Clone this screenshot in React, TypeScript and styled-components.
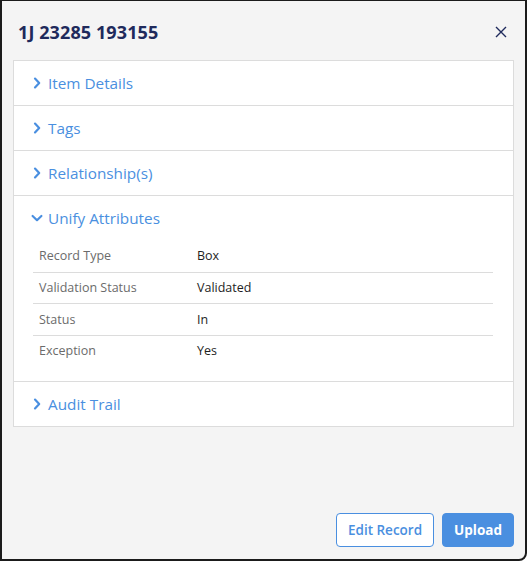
import React, { useState } from 'react';
import styled, { createGlobalStyle } from 'styled-components';

const GlobalStyle = createGlobalStyle`
  html, body {
    margin: 0;
    padding: 0;
    background: #ffffff;
  }
  body {
    font-family: 'Open Sans', 'Liberation Sans', sans-serif;
  }
  * {
    box-sizing: border-box;
  }
`;

const BLUE = '#4a8fe0';

type Attr = { label: string; value: string };

const attributes: Attr[] = [
  { label: 'Record Type', value: 'Box' },
  { label: 'Validation Status', value: 'Validated' },
  { label: 'Status', value: 'In' },
  { label: 'Exception', value: 'Yes' },
];

const sections = ['Item Details', 'Tags', 'Relationship(s)', 'Unify Attributes', 'Audit Trail'];

function Chevron({ open }: { open: boolean }) {
  return (
    <ChevronBox $open={open}>
      <svg width='12' height='12' viewBox='0 0 12 12'>
        <path d='M4 1.6 L8.2 6 L4 10.4' fill='none' stroke={BLUE} strokeWidth='2.2' strokeLinecap='round' strokeLinejoin='round' />
      </svg>
    </ChevronBox>
  );
}

function App() {
  const [openId, setOpenId] = useState<string | null>('Unify Attributes');

  return (
    <>
      <GlobalStyle />
      <Dialog>
        <Header>
          <Title>1J 23285 193155</Title>
          <CloseButton aria-label='닫기'>
            <svg width='12' height='12' viewBox='0 0 12 12'>
              <path d='M1 1 L11 11 M11 1 L1 11' stroke='#1f2a5c' strokeWidth='1.4' />
            </svg>
          </CloseButton>
        </Header>
        <Accordion>
          {sections.map(name => {
            const open = openId === name;
            return (
              <Section key={name}>
                <SectionHead onClick={() => setOpenId(prev => (prev === name ? null : name))}>
                  <Chevron open={open} />
                  <span>{name}</span>
                </SectionHead>
                {open && (
                  <AttrTable>
                    {attributes.map(item => (
                      <AttrRow key={item.label}>
                        <AttrLabel>{item.label}</AttrLabel>
                        <AttrValue>{item.value}</AttrValue>
                      </AttrRow>
                    ))}
                  </AttrTable>
                )}
              </Section>
            );
          })}
        </Accordion>
        <Footer>
          <Button>Edit Record</Button>
          <Button $primary>Upload</Button>
        </Footer>
      </Dialog>
    </>
  );
}

export default App;

const Dialog = styled.div`
  width: 527px;
  height: 561px;
  display: flex;
  flex-direction: column;
  background: #f4f4f4;
  border-top: 1px solid #1b1b1b;
  border-left: 2px solid #1b1b1b;
  border-right: 2px solid #1b1b1b;
  border-bottom: 2px solid #1b1b1b;
  border-bottom-right-radius: 8px;
  padding: 0 11px 12px 11px;
`;

const Header = styled.div`
  height: 59px;
  display: flex;
  align-items: center;
  justify-content: space-between;
  padding: 2px 6px 0 5px;
`;

const Title = styled.h1`
  margin: 0;
  font-size: 18px;
  font-weight: 700;
  color: #1f2a5c;
  letter-spacing: 0.1px;
`;

const CloseButton = styled.button`
  border: none;
  background: transparent;
  padding: 0;
  width: 14px;
  height: 14px;
  display: flex;
  align-items: center;
  justify-content: center;
  cursor: pointer;
`;

const Accordion = styled.div`
  background: #ffffff;
  border: 1px solid #dcdcdc;
  display: flex;
  flex-direction: column;
`;

const Section = styled.div`
  & + & {
    border-top: 1px solid #dcdcdc;
  }
`;

const SectionHead = styled.div`
  height: 44px;
  display: flex;
  align-items: center;
  gap: 5px;
  padding-left: 17px;
  color: ${BLUE};
  font-size: 15.3px;
  cursor: pointer;
`;

const ChevronBox = styled.span<{ $open: boolean }>`
  width: 12px;
  height: 12px;
  display: flex;
  transform: rotate(${p => (p.$open ? '90deg' : '0deg')});
`;

const AttrTable = styled.div`
  margin: 0 20px 0 19px;
  padding: 0 0 15px;
`;

const AttrRow = styled.div`
  display: grid;
  grid-template-columns: 158px 1fr;
  align-items: center;
  height: 31.5px;
  padding-left: 6px;
  font-size: 12.5px;
  & + & {
    border-top: 1px solid #dcdcdc;
  }
`;

const AttrLabel = styled.span`
  color: #6b6b6b;
`;

const AttrValue = styled.span`
  color: #1e1e1e;
`;

const Footer = styled.div`
  margin-top: auto;
  display: flex;
  justify-content: flex-end;
  gap: 8px;
`;

const Button = styled.button<{ $primary?: boolean }>`
  height: 34px;
  padding: 0 11px;
  border-radius: 4px;
  border: 1.5px solid ${BLUE};
  background: ${p => (p.$primary ? BLUE : '#ffffff')};
  color: ${p => (p.$primary ? '#ffffff' : BLUE)};
  font-family: 'Open Sans', 'Liberation Sans', sans-serif;
  font-size: 13.5px;
  font-weight: ${p => (p.$primary ? 700 : 600)};
  cursor: pointer;
`;
